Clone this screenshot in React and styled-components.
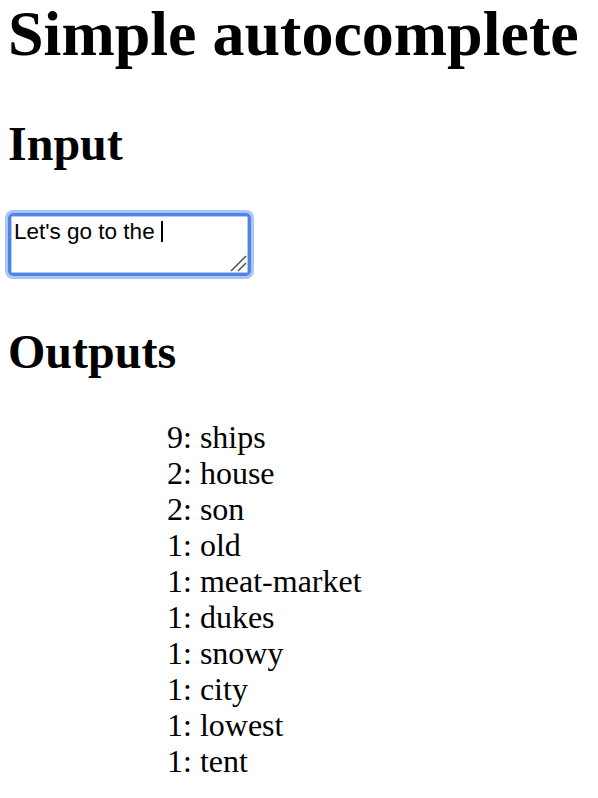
import React from 'react';
import styled, { createGlobalStyle } from 'styled-components';

const GlobalStyle = createGlobalStyle`
  body {
    margin: 0;
    background: #ffffff;
    color: #000000;
    font-family: "Liberation Serif", "Times New Roman", serif;
  }
`;

const Page = styled.div`
  padding: 0 8px;
`;

const Title = styled.h1`
  margin: 0;
  font-size: 64px;
  line-height: 68px;
  font-weight: bold;
  white-space: nowrap;
`;

const Heading = styled.h2`
  margin: ${p => p.$top}px 0 ${p => p.$bottom}px;
  font-size: 48px;
  line-height: 54px;
  font-weight: bold;
`;

const Editor = styled.div`
  position: relative;
  box-sizing: border-box;
  width: 243px;
  height: 63px;
  padding: 3px 3px;
  border: 3px solid #4f84e4;
  border-radius: 5px;
  box-shadow: 0 0 0 3px #aac6f6, inset 0 0 0 1px #b3cbf3;
  font-family: "Liberation Sans", Arial, sans-serif;
  font-size: 22.5px;
  line-height: 26px;
  white-space: pre;
`;

const Caret = styled.span`
  display: inline-block;
  width: 2px;
  height: 21px;
  background: #000000;
  vertical-align: -3px;
`;

const Grip = styled.svg`
  position: absolute;
  right: 1px;
  bottom: 1px;
`;

const Outputs = styled.ul`
  margin: 0;
  padding: 0 0 0 159px;
  list-style: none;
  font-size: 32px;
  line-height: 36px;
`;

const words = [
  [9, 'ships'],
  [2, 'house'],
  [2, 'son'],
  [1, 'old'],
  [1, 'meat-market'],
  [1, 'dukes'],
  [1, 'snowy'],
  [1, 'city'],
  [1, 'lowest'],
  [1, 'tent'],
];

export default function App() {
  return (
    <Page>
      <GlobalStyle />
      <Title>Simple autocomplete</Title>
      <Heading $top={49} $bottom={42}>Input</Heading>
      <Editor role="textbox" aria-multiline="true">
        {"Let's go to the "}<Caret />
        <Grip width="17" height="17" viewBox="0 0 17 17">
          <line x1="1" y1="16" x2="16" y2="1" stroke="#555" strokeWidth="1.6" />
          <line x1="8" y1="16" x2="16" y2="8" stroke="#555" strokeWidth="1.6" />
        </Grip>
      </Editor>
      <Heading $top={49} $bottom={40}>Outputs</Heading>
      <Outputs>
        {words.map(([n, w]) => (
          <li key={w}>{n}: {w}</li>
        ))}
      </Outputs>
    </Page>
  );
}
